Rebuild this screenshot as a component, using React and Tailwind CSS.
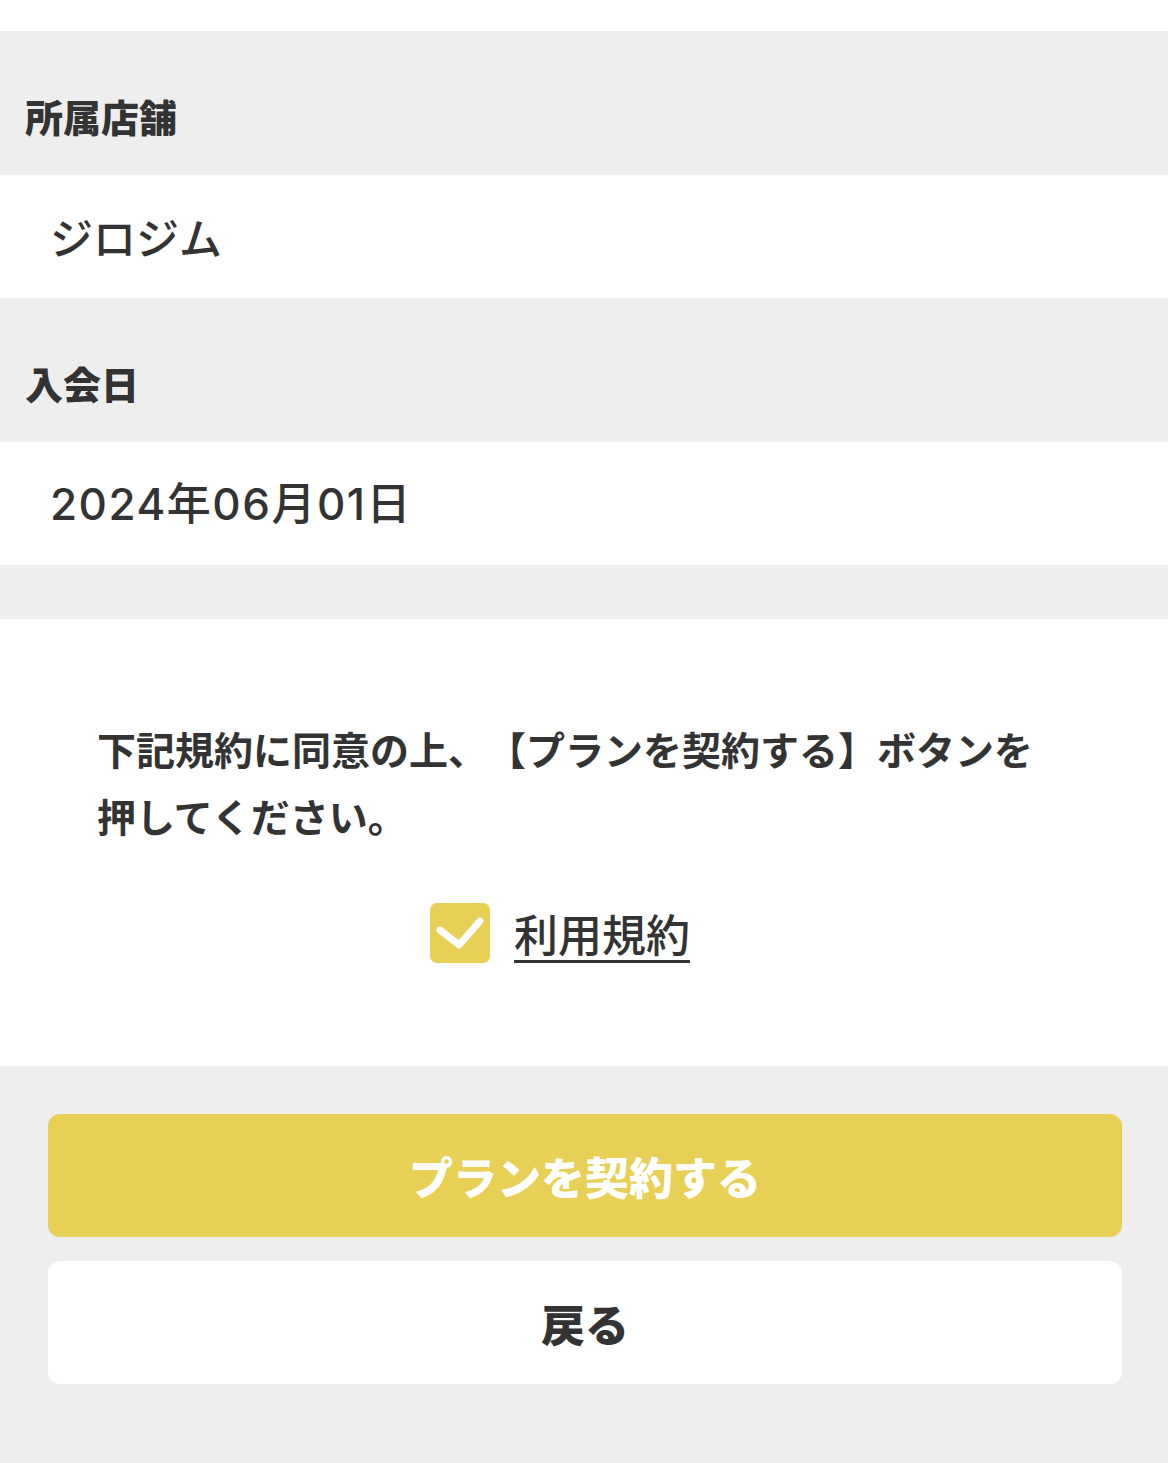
export default function App() {
  const font = { fontFamily: '"Noto Sans CJK JP", "Noto Sans", sans-serif' }

  return (
    <div className="min-h-[1463px] bg-[#eeeeee] text-[#333333] [text-spacing-trim:space-all]" style={font}>
      <div className="h-[31px] bg-white" />

      {/* 所属店舗 */}
      <div className="flex h-[144px] items-center px-[25px] pt-[26px]">
        <h2 className="text-[38px] font-black leading-none">所属店舗</h2>
      </div>
      <div className="flex h-[123px] items-center bg-white px-[50px]">
        <p className="text-[43px] font-medium leading-none">ジロジム</p>
      </div>

      {/* 入会日 */}
      <div className="flex h-[144px] items-center px-[25px] pt-[26px]">
        <h2 className="text-[38px] font-black leading-none">入会日</h2>
      </div>
      <div className="flex h-[123px] items-center bg-white px-[50px]">
        <p className="font-['Inter','Noto_Sans_CJK_JP',sans-serif] text-[44px] font-medium leading-none tracking-[1.5px]">2024年06月01日</p>
      </div>

      <div className="h-[54px]" />

      {/* 規約 */}
      <div className="flex h-[447px] flex-col bg-white px-[97px] pt-[96px]">
        <p className="max-w-[960px] text-[39px] font-bold leading-[67px]">
          下記規約に同意の上、【プランを契約する】ボタンを押してください。
        </p>
        <label className="mt-[54px] mr-[48px] flex items-center justify-center gap-[24px]">
          <span className="flex h-[60px] w-[60px] items-center justify-center rounded-[7px] bg-[#e8d056]">
            <svg className="h-[60px] w-[60px]" viewBox="0 0 60 60" fill="none" stroke="white" strokeWidth={7} strokeLinecap="round" strokeLinejoin="round">
              <path d="M10 27l19 15L50 18" />
            </svg>
          </span>
          <a href="#" className="text-[44px] font-medium leading-none underline decoration-[3px] underline-offset-[8px]">利用規約</a>
        </label>
      </div>

      {/* ボタン */}
      <div className="flex flex-col gap-[24px] pl-[48px] pr-[46px] pt-[48px]">
        <button className="flex h-[123px] items-center justify-center rounded-[12px] bg-[#e8d056] text-[44px] font-black text-white">
          プランを契約する
        </button>
        <button className="flex h-[123px] items-center justify-center rounded-[12px] bg-white text-[44px] font-black text-[#333333]">
          戻る
        </button>
      </div>
    </div>
  )
}
